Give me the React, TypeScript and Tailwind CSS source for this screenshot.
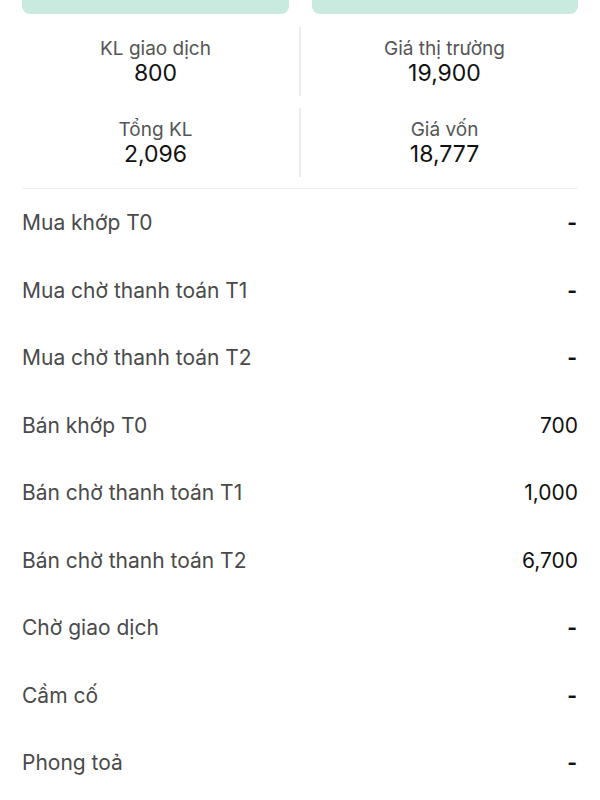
const stats = [
  [
    { label: "KL giao dịch", value: "800" },
    { label: "Giá thị trường", value: "19,900" },
  ],
  [
    { label: "Tổng KL", value: "2,096" },
    { label: "Giá vốn", value: "18,777" },
  ],
];

const rows = [
  { label: "Mua khớp T0", value: "-" },
  { label: "Mua chờ thanh toán T1", value: "-" },
  { label: "Mua chờ thanh toán T2", value: "-" },
  { label: "Bán khớp T0", value: "700" },
  { label: "Bán chờ thanh toán T1", value: "1,000" },
  { label: "Bán chờ thanh toán T2", value: "6,700" },
  { label: "Chờ giao dịch", value: "-" },
  { label: "Cầm cố", value: "-" },
  { label: "Phong toả", value: "-" },
];

function StatCell({ label, value }: { label: string; value: string }) {
  return (
    <div className="flex flex-1 flex-col items-center justify-center">
      <span className="text-[19px] leading-[22px] text-[#555555]">{label}</span>
      <span className="text-[23px] leading-[26px] text-[#111111]">{value}</span>
    </div>
  );
}

export default function App() {
  return (
    <div
      className="h-[800px] w-full overflow-hidden bg-white px-[22px]"
      style={{ fontFamily: "Inter, 'Noto Sans', sans-serif" }}
    >
      {/* action buttons, scrolled mostly out of view */}
      <div className="-mt-[30px] flex gap-[23px]">
        <button className="flex h-[44px] flex-1 items-start justify-center rounded-lg bg-[#c9eadf] pt-[4px] text-[19px] leading-[24px] font-medium text-[#0d7a55]">
          Chuyển quyền
        </button>
        <button className="flex h-[44px] flex-1 items-start justify-center rounded-lg bg-[#c9eadf] pt-[4px] text-[19px] leading-[24px] font-medium text-[#0d7a55]">
          Bán
        </button>
      </div>

      <div className="mt-[13px] flex flex-col gap-[12px]">
        {stats.map((pair, i) => (
          <div key={i} className="flex h-[69px]">
            <StatCell {...pair[0]} />
            <div className="mx-[10px] w-[2px] bg-[#ececec]" />
            <StatCell {...pair[1]} />
          </div>
        ))}
      </div>

      <div className="mt-[11px] border-t border-[#efefef]">
        {rows.map((r) => (
          <div key={r.label} className="flex h-[67.5px] items-center justify-between">
            <span className="text-[21px] text-[#4a4a4a]">{r.label}</span>
            {r.value === "-" ? (
              <span className="mr-px text-[21px] font-bold text-[#111111]">-</span>
            ) : (
              <span className="text-[21px] text-[#111111]">{r.value}</span>
            )}
          </div>
        ))}
      </div>
    </div>
  );
}
